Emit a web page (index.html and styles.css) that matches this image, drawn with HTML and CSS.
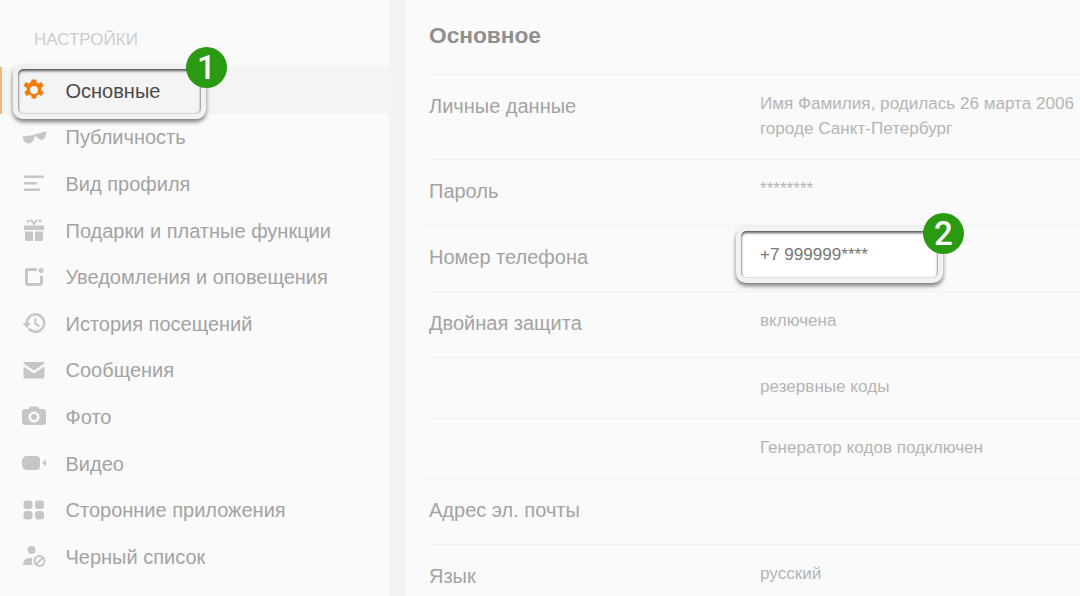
FILE: index.html
```html
<!DOCTYPE html>
<html lang="ru">
<head>
<meta charset="utf-8">
<title>Настройки</title>
<link rel="stylesheet" href="styles.css">
</head>
<body>
<div class="page">
  <aside class="side">
    <div class="side-title">НАСТРОЙКИ</div>
    <nav class="menu">
      <a class="item active">
        <svg class="ic" viewBox="0 0 24 24"><path fill="#ee7f0e" fill-rule="evenodd" d="M9.800 1.500h4.400l.6 3 1.900.9 2.800-1.300 2.200 3.800-2.400 1.900v2.400l2.400 1.900-2.200 3.800-2.800-1.300-1.900.9-.6 3H9.800l-.6-3-1.900-.9-2.800 1.300-2.200-3.800 2.400-1.900V9.800L1.500 7.900l2.200-3.800 2.800 1.300 1.900-.9zM12 8a4 4 0 1 0 0 8 4 4 0 0 0 0-8z"/></svg>
        <span>Основные</span>
      </a>
      <a class="item">
        <svg class="ic" viewBox="0 0 24 24"><path d="M0.500 11.500 12 10l1-.7 11-2.800c.3 3.500-.8 7-3 8-2.500 1-5.200-.4-6.700-3.200l-2 .6c-.3 3.800-2.800 6.600-5.800 6.600-3.200 0-5.500-3-6-7z"/></svg>
        <span>Публичность</span>
      </a>
      <a class="item">
        <svg class="ic" viewBox="0 0 24 24"><path d="M2 4.500h20v2.500H2zM2 11h13v2.500H2zM2 17.500h16V20H2z"/></svg>
        <span>Вид профиля</span>
      </a>
      <a class="item">
        <svg class="ic" viewBox="0 0 24 24"><path fill-rule="evenodd" d="M2 7.500h20V12H2zM3 13.500h8V23H5a2 2 0 0 1-2-2zM13 13.500h8V21a2 2 0 0 1-2 2h-6zM11 7V6L8 2.500 9.500 1 12 4l2.500-3L16 2.500 13 6v1z"/><circle cx="6" cy="3" r="1.500"/><circle cx="18" cy="3" r="1.500"/></svg>
        <span>Подарки и платные функции</span>
      </a>
      <a class="item">
        <svg class="ic" viewBox="0 0 24 24"><path fill-rule="evenodd" d="M6 3h9v3H6.500A.5.5 0 0 0 6 6.500v11a.5.5 0 0 0 .5.500h11a.5.5 0 0 0 .5-.5V11h3v7a4 4 0 0 1-4 3H6a3 3 0 0 1-3-3V6a3 3 0 0 1 3-3z"/><circle cx="19" cy="5.500" r="2.500"/></svg>
        <span>Уведомления и оповещения</span>
      </a>
      <a class="item">
        <svg class="ic" viewBox="0 0 24 24"><path d="M13.500 2a10 10 0 1 1-7.800 16.300l2-1.700a7.400 7.400 0 1 0-1.600-4.600h3L4.800 17 .5 12h3a10 10 0 0 1 10-10z"/><path d="M12.300 7h2.200v5l3.500 2.500-1.200 1.800-4.500-3.100z"/></svg>
        <span>История посещений</span>
      </a>
      <a class="item">
        <svg class="ic" viewBox="0 0 24 24"><path d="M1.500 5.500A1.500 1.500 0 0 1 3 4h18a1.500 1.500 0 0 1 1.500 1.500L12 12.500z"/><path d="M1.500 8.500 12 15.500 22.500 8.500V19a1.500 1.500 0 0 1-1.500 1.500H3A1.500 1.500 0 0 1 1.500 19z"/></svg>
        <span>Сообщения</span>
      </a>
      <a class="item">
        <svg class="ic" viewBox="0 0 24 24"><path fill-rule="evenodd" d="M8 2.500h8L17.500 5H21a3 3 0 0 1 3 3v10a3 3 0 0 1-3 3H3a3 3 0 0 1-3-3V8a3 3 0 0 1 3-3h3.500zM12 7.500a5.500 5.500 0 1 0 0 11 5.500 5.500 0 0 0 0-11zm0 2.500a3 3 0 1 1 0 6 3 3 0 0 1 0-6z"/></svg>
        <span>Фото</span>
      </a>
      <a class="item">
        <svg class="ic" viewBox="0 0 24 24"><path d="M5 5h9a4 4 0 0 1 4 4v6a4 4 0 0 1-4 4H5a5 5 0 0 1-5-5v-4a5 5 0 0 1 5-5zM20 12l4-3.500v7z"/></svg>
        <span>Видео</span>
      </a>
      <a class="item">
        <svg class="ic" viewBox="0 0 24 24"><rect x="1.500" y="2.500" width="9" height="8.500" rx="3"/><rect x="13" y="2.500" width="9" height="8.500" rx="3"/><rect x="1.500" y="13" width="9" height="8.500" rx="3"/><rect x="13" y="13" width="9" height="8.500" rx="3"/></svg>
        <span>Сторонние приложения</span>
      </a>
      <a class="item">
        <svg class="ic" viewBox="0 0 24 24"><circle cx="9.500" cy="6" r="4"/><path d="M1 20a6 6 0 0 1 6-6h3.500a8 8 0 0 0 0 7H2a1 1 0 0 1-1-1z"/><circle cx="17.500" cy="17" r="5" fill="none" stroke="#c6c6c6" stroke-width="2"/><path d="m14 20.500 7-7" fill="none" stroke="#c6c6c6" stroke-width="2"/></svg>
        <span>Черный список</span>
      </a>
    </nav>
    <div class="mark mark-one"><b class="badge">1</b></div>
  </aside>
  <main class="main">
    <h1 class="heading">Основное</h1>
    <div class="rows">
      <div class="row row-tall"><div class="label">Личные данные</div><div class="value">Имя Фамилия, родилась 26 марта 2006<br>городе Санкт-Петербург</div></div>
      <div class="row"><div class="label">Пароль</div><div class="value">********</div></div>
      <div class="row"><div class="label">Номер телефона</div><div class="value value-strong">+7 999999****</div></div>
      <div class="row"><div class="label">Двойная защита</div><div class="value">включена</div></div>
      <div class="row row-sub"><div class="label"></div><div class="value">резервные коды</div></div>
      <div class="row row-sub"><div class="label"></div><div class="value">Генератор кодов подключен</div></div>
      <div class="row"><div class="label">Адрес эл. почты</div><div class="value"></div></div>
      <div class="row"><div class="label">Язык</div><div class="value">русский</div></div>
    </div>
    <div class="mark mark-two"><b class="badge">2</b></div>
  </main>
</div>
</body>
</html>
```

FILE: styles.css
```css
html, body {
  margin: 0;
  height: 596px;
  overflow: hidden;
}
body {
  font-family: "Liberation Sans", Arial, sans-serif;
  background: #f3f3f3;
}
.page {
  display: flex;
  gap: 17px;
  height: 596px;
  overflow: hidden;
}
.side {
  position: relative;
  width: 389px;
  flex: none;
  background: #fafafa;
}
.side-title {
  padding: 31px 0 0 34px;
  height: 67px;
  box-sizing: border-box;
  font-size: 17px;
  line-height: 18px;
  color: #cdcdcd;
}
.menu {
  display: flex;
  flex-direction: column;
}
.item {
  display: flex;
  align-items: center;
  gap: 20px;
  height: 46.600px;
  padding-left: 22px;
  font-size: 20px;
  color: #a3a3a3;
}
.item span {
  padding-top: 2px;
  margin-left: -0.500px;
}
.item.active {
  color: #4a4a4a;
  background: #f4f4f4;
  box-shadow: inset 2px 0 0 #f3b77d;
}
.ic {
  width: 24px;
  height: 24px;
  flex: none;
  fill: #c6c6c6;
}
.main {
  position: relative;
  flex: 1;
  background: #fafafa;
  padding: 0 0 0 23px;
}
.heading {
  margin: 0;
  height: 75px;
  box-sizing: border-box;
  padding-top: 22px;
  font-size: 22.700px;
  line-height: 26px;
  font-weight: 700;
  color: #8f8f8f;
  border-bottom: 1px solid #f1f1f1;
}
.row {
  display: flex;
  height: 66px;
  box-sizing: border-box;
  padding-top: 20px;
  border-bottom: 1px solid #f1f1f1;
}
.row-tall {
  height: 85px;
}
.row-sub {
  height: 60.500px;
}
.label {
  width: 331px;
  flex: none;
  font-size: 20px;
  line-height: 22px;
  color: #a3a3a3;
}
.value {
  font-size: 17.100px;
  line-height: 25px;
  margin-top: -4px;
  color: #b5b5b5;
  white-space: nowrap;
}
.value-strong {
  position: relative;
  z-index: 2;
  color: #777;
  margin-top: -4px;
}
.mark {
  position: absolute;
  box-sizing: border-box;
  border: 5px solid #f1f1f1;
  border-radius: 10px;
  box-shadow: 0 3px 4px rgba(0, 0, 0, .5), inset 0 2px 3px rgba(0, 0, 0, .65), inset 0 0 2px rgba(0, 0, 0, .35);
}
.mark-one {
  left: 13px;
  top: 64px;
  width: 193px;
  height: 55px;
}
.mark-two {
  left: 330px;
  top: 226px;
  width: 207px;
  height: 57px;
  background: #fff;
}
.badge {
  position: absolute;
  right: -26px;
  top: -22px;
  width: 41px;
  height: 41px;
  border-radius: 50%;
  background: #2a9a12;
  color: #fff;
  font-family: "Roboto", "Liberation Sans", sans-serif;
  font-size: 33px;
  line-height: 41px;
  font-weight: 500;
  text-align: center;
}
.mark-two .badge {
  top: -18px;
  right: -26px;
}
```
